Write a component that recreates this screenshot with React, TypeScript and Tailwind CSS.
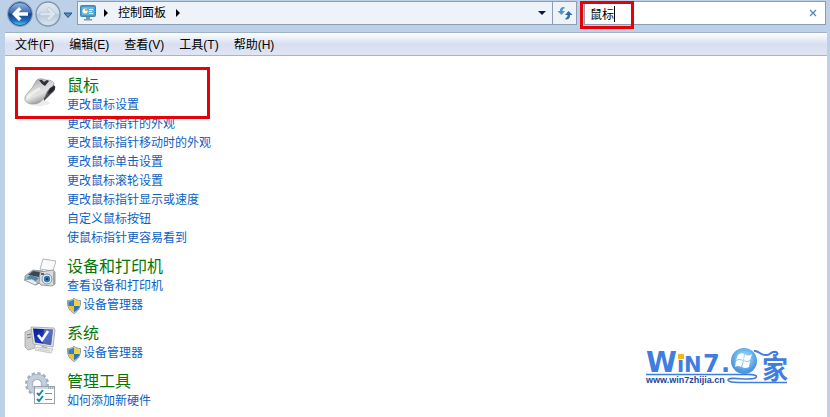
import React, { useState } from 'react';

interface ControlLink {
  label: string;
  shield?: boolean;
}

interface ControlSection {
  title: string;
  icon: React.ReactNode;
  links: ControlLink[];
  highlightFirst?: boolean;
}

const MouseIcon = () => (
  <svg className="w-8 h-8" viewBox="0 0 32 32" aria-hidden="true">
    <defs>
      <linearGradient id="mouseBody" x1="0.2" y1="0" x2="0.7" y2="1">
        <stop offset="0" stopColor="#9c9c9c" />
        <stop offset="0.35" stopColor="#d2d2d2" />
        <stop offset="0.6" stopColor="#e4e4e4" />
        <stop offset="1" stopColor="#7c7c7c" />
      </linearGradient>
    </defs>
    <ellipse cx="15" cy="27" rx="11" ry="3" fill="#ececec" />
    <path d="M24 8 L30 9 C32 12 31 15 28 17 L20 25 C19 20 21 13 24 8Z" fill="#4a4d52" />
    <path d="M13 4 C15 2 19 3 22 4 C26 4 30 5 30 8 C29 11 25 12 23 16 C21 22 17 28 9 28 C3 28 0 25 1 21 C2 18 6 15 8 12 C10 9 11 6 13 4Z" fill="url(#mouseBody)" stroke="#8b8b8b" strokeWidth="0.6" />
    <path d="M15 4 L18 4 L20 6 L23 4 L25 5 L21 10 L18 8Z" fill="#2c3036" />
    <path d="M26 12 L31 10 C32 12 30 14 28 16 L24 18Z" fill="#22262b" />
    <path d="M4 21 C7 17 12 15 15 13" stroke="#fff" strokeWidth="3" strokeLinecap="round" fill="none" opacity="0.55" />
  </svg>
);

const PrinterIcon = () => (
  <svg className="w-8 h-8" viewBox="0 0 32 32" aria-hidden="true">
    <path d="M19 2 L32 4 L29 14 L16 12Z" fill="#fafafa" stroke="#a5a5a5" strokeWidth="0.8" />
    <path d="M1 19 L9 13 L19 14 L17 25 L12 28 L1 23Z" fill="#b7c0c6" stroke="#7c878f" strokeWidth="0.8" />
    <path d="M4 18 L9 14 L17 15 L15 20Z" fill="#3d464d" />
    <path d="M2 21 L7 18 L15 21 L12 24Z" fill="#4a89a8" />
    <path d="M0 23 L8 22 L14 26 L11 28Z" fill="#e5edf2" stroke="#71808b" strokeWidth="0.6" />
    <path d="M16 15 L29 13 L31 15 V27 L28 29 L17 28 L15 26Z" fill="#d9dbdc" stroke="#85898c" strokeWidth="0.8" />
    <path d="M29 14 L31 16 V27 L29 28Z" fill="#a0a5a8" />
    <rect x="17" y="16" width="3" height="2" fill="#59646d" />
    <circle cx="23" cy="22" r="5" fill="#edf2f4" stroke="#7e94a4" />
    <circle cx="23" cy="22" r="3.2" fill="#2d78b4" />
    <circle cx="23" cy="22" r="1.3" fill="#163858" />
  </svg>
);

const SystemIcon = () => (
  <svg className="w-8 h-8" viewBox="0 0 32 32" aria-hidden="true">
    <defs>
      <linearGradient id="systemScreen" x1="0" y1="0" x2="1" y2="1">
        <stop offset="0" stopColor="#071b91" />
        <stop offset="0.5" stopColor="#1838be" />
        <stop offset="1" stopColor="#061765" />
      </linearGradient>
    </defs>
    <path d="M1 8 L8 5 L11 7 V24 L4 26 L1 23Z" fill="#cfd0cd" stroke="#a0a19d" strokeWidth="0.8" />
    <path d="M3 11 L7 10 M3 14 L7 13" stroke="#777" />
    <path d="M7 3 L30 4 L31 6 L29 23 L9 20Z" fill="#dfe1df" stroke="#a0a3a0" strokeWidth="0.8" />
    <path d="M9 4.5 L29 5.5 L27 21 L11 18.5Z" fill="url(#systemScreen)" />
    <path d="M20 5 L29 5.5 L27 21 L19 19.7Z" fill="#8da3e4" opacity="0.5" />
    <path d="M14 11 L18 16 L24 7" stroke="#fff" strokeWidth="2.6" fill="none" />
    <path d="M18 22 L23 23 L24 25 L17 24Z" fill="#a4a7a4" />
    <path d="M13 23 L29 25 L27 29 L11 26Z" fill="#ececea" stroke="#bbb" strokeWidth="0.8" />
    <path d="M14 25 L26 27" stroke="#c6c6c6" />
  </svg>
);

const ToolsIcon = () => (
  <svg className="w-8 h-8" viewBox="0 0 32 32" aria-hidden="true">
    <circle cx="13" cy="12" r="10.5" fill="none" stroke="#a3b2bf" strokeWidth="3" strokeDasharray="3.2 2.3" />
    <circle cx="13" cy="12" r="7.5" fill="none" stroke="#94a5b3" strokeWidth="5.5" />
    <circle cx="13" cy="12" r="7.5" fill="none" stroke="#c3d0db" strokeWidth="4.5" />
    <circle cx="13" cy="12" r="4.5" fill="#fff" stroke="#a4b3be" />
    <rect x="10.5" y="14.5" width="20" height="17" fill="#fff" stroke="#98a3ac" />
    <path d="M11 16 H30" stroke="#cddae6" strokeWidth="2" />
    <path d="M24 16 H29" stroke="#6f7f8e" strokeDasharray="1 1" />
    <path d="M13 21 L15 23 L19 18 M13 27 L15 29 L19 24" stroke="#16899b" strokeWidth="2" fill="none" />
    <path d="M21 21.5 H28 M21 27.5 H28" stroke="#858e95" />
  </svg>
);

const ShieldIcon = () => (
  <svg className="w-4 h-4 shrink-0" viewBox="0 0 16 16" aria-hidden="true">
    <path d="M7 0.5 C9 2 11 2.5 13.5 2.5 C14 9 11 13.5 7 15.5 C3 13.5 0 9 0.5 2.5 C3 2.5 5 2 7 0.5Z" fill="#d5dade" stroke="#8f979d" />
    <path d="M7 1.6 V8 H1.4 L1.3 3.4 C3.5 3.4 5 2.9 7 1.6Z" fill="#2f7fc9" />
    <path d="M7 1.6 V8 H12.6 L12.7 3.4 C10.5 3.4 9 2.9 7 1.6Z" fill="#f7cf38" />
    <path d="M7 8 V14.3 C4 12.8 2 10.7 1.4 8Z" fill="#f3c22b" />
    <path d="M7 8 V14.3 C10 12.8 12 10.7 12.6 8Z" fill="#2a75c0" />
  </svg>
);

const MonitorIcon = () => (
  <svg className="w-4 h-4" viewBox="0 0 16 16" aria-hidden="true">
    <rect x="0.5" y="0.5" width="15" height="11" rx="1" fill="#479bc9" stroke="#4a86ad" />
    <rect x="2" y="2" width="12" height="8" fill="#62b9df" />
    <circle cx="5" cy="6" r="2.5" fill="#fff" />
    <path d="M5 6 V3.5 A2.5 2.5 0 0 1 7.5 6Z" fill="#f0b323" />
    <path d="M9 4.5 H13 M9 6.5 H12 M9 8.5 H13" stroke="#fff" />
    <path d="M6 12 H10 V14 H12 V15.5 H4 V14 H6Z" fill="#779bb0" />
  </svg>
);

const NavButtons = () => (
  <div className="flex items-center">
    <button aria-label="后退" className="w-7 h-7">
      <svg className="w-7 h-7" viewBox="0 0 28 28">
        <defs>
          <linearGradient id="backFill" x1="0" y1="0" x2="0" y2="1">
            <stop offset="0" stopColor="#98b9e2" />
            <stop offset="0.45" stopColor="#3b6bb5" />
            <stop offset="0.5" stopColor="#11408d" />
            <stop offset="0.8" stopColor="#1c72c6" />
            <stop offset="1" stopColor="#58d0f5" />
          </linearGradient>
        </defs>
        <circle cx="13" cy="13" r="12.5" fill="#cbdced" stroke="#8498b3" />
        <circle cx="13" cy="13" r="11.5" fill="url(#backFill)" stroke="#244e86" />
        <path d="M5 13 L12 6 L14.5 8.5 L11.5 11.3 H21 V14.7 H11.5 L14.5 17.5 L12 20Z" fill="#fff" />
      </svg>
    </button>
    <button aria-label="前进" className="w-7 h-7">
      <svg className="w-7 h-7" viewBox="0 0 28 28">
        <defs>
          <linearGradient id="forwardFill" x1="0" y1="0" x2="0" y2="1">
            <stop offset="0" stopColor="#e0e9f3" />
            <stop offset="0.48" stopColor="#cddae7" />
            <stop offset="0.52" stopColor="#b9c9da" />
            <stop offset="1" stopColor="#dae6f1" />
          </linearGradient>
        </defs>
        <circle cx="13" cy="13" r="12" fill="url(#forwardFill)" stroke="#8397ae" strokeWidth="1.4" />
        <path d="M21 13 L14 6 L11.5 8.5 L14.5 11.3 H5 V14.7 H14.5 L11.5 17.5 L14 20Z" fill="#dbe5ee" stroke="#b3c3d3" strokeWidth="0.7" />
      </svg>
    </button>
    <button aria-label="最近的页面" className="w-3 h-7 flex items-center justify-center">
      <svg className="w-3 h-3" viewBox="0 0 12 12">
        <path d="M1 4 H9 L5 8.5Z" fill="#4b91c8" stroke="#235481" />
      </svg>
    </button>
  </div>
);

const Chevron = () => (
  <svg className="w-1 h-2" viewBox="0 0 4 8" aria-hidden="true">
    <path d="M0 0 L4 4 L0 8Z" fill="#000" />
  </svg>
);

const AddressBar = () => (
  <div className="flex-1 flex h-6 border border-[#8d9db1] bg-[#eef3fa]">
    <div className="flex-1 flex items-center gap-2 pl-[2px]">
      <MonitorIcon />
      <Chevron />
      <button className="px-[2px]">控制面板</button>
      <Chevron />
    </div>
    <button aria-label="以前的位置" className="w-5 flex items-center justify-center">
      <svg className="w-2 h-1" viewBox="0 0 8 4">
        <path d="M0 0 H8 L4 4Z" fill="#0b1a3c" />
      </svg>
    </button>
    <button aria-label="刷新" className="w-6 flex items-center justify-center border-l border-[#8d9db1]">
      <svg className="w-4 h-4" viewBox="0 0 16 16">
        <path d="M7.5 2 C4 2 3 3.5 3 6 H0.5 L4.5 10 L8 6 H5.5 C5.5 4.5 6 3.8 7.5 3.5Z" fill="#4b97cb" />
        <path d="M8.5 14.5 C12 14.5 13 13 13 10 H15.5 L11.5 6 L8 10 H10.5 C10.5 12 10 12.6 8.5 13Z" fill="#2f6da8" />
      </svg>
    </button>
  </div>
);

const SearchBox = () => {
  const [query, setQuery] = useState('鼠标');

  return (
    <div className="relative w-[242px] flex items-center h-6 border border-[#8d9db1] bg-white">
      <input
        aria-label="搜索控制面板"
        value={query}
        onChange={(e) => setQuery(e.target.value)}
        className="flex-1 min-w-0 h-full pl-[5px] bg-transparent focus:outline-none"
      />
      <button aria-label="清除" onClick={() => setQuery('')} className="w-6 h-full flex items-center justify-center">
        <svg className="w-2 h-2" viewBox="0 0 8 8">
          <path d="M1 1 L7 7 M7 1 L1 7" stroke="#5686b5" strokeWidth="1.3" />
        </svg>
      </button>
      <span className="absolute left-[29px] top-1 w-px h-4 bg-black" />
      <span className="absolute -left-[5px] -top-px w-[54px] h-7 border-3 border-[#e60008] pointer-events-none" />
    </div>
  );
};

const menuItems = ['文件(F)', '编辑(E)', '查看(V)', '工具(T)', '帮助(H)'];

const sections: ControlSection[] = [
  {
    title: '鼠标',
    icon: <MouseIcon />,
    highlightFirst: true,
    links: [
      { label: '更改鼠标设置' },
      { label: '更改鼠标指针的外观' },
      { label: '更改鼠标指针移动时的外观' },
      { label: '更改鼠标单击设置' },
      { label: '更改鼠标滚轮设置' },
      { label: '更改鼠标指针显示或速度' },
      { label: '自定义鼠标按钮' },
      { label: '使鼠标指针更容易看到' },
    ],
  },
  {
    title: '设备和打印机',
    icon: <PrinterIcon />,
    links: [{ label: '查看设备和打印机' }, { label: '设备管理器', shield: true }],
  },
  {
    title: '系统',
    icon: <SystemIcon />,
    links: [{ label: '设备管理器', shield: true }],
  },
  {
    title: '管理工具',
    icon: <ToolsIcon />,
    links: [{ label: '如何添加新硬件' }],
  },
];

const Section: React.FC<{ section: ControlSection }> = ({ section }) => (
  <section className="relative flex items-start gap-[11px]">
    {section.icon}
    <div>
      <h2 className="h-5 text-base leading-[19px] text-[#087508]">
        <a href="#">{section.title}</a>
      </h2>
      <ul>
        {section.links.map((link) => (
          <li key={link.label} className="h-[19px] leading-[19px]">
            <a href="#" className="inline-flex items-center text-[#0c62c4] hover:underline">
              {link.shield && <ShieldIcon />}
              {link.label}
            </a>
          </li>
        ))}
      </ul>
    </div>
    {section.highlightFirst && (
      <span className="absolute -left-[9px] -top-[9px] w-[195px] h-[52px] border-3 border-[#e60008] pointer-events-none" />
    )}
  </section>
);

const SiteLogo = () => (
  <svg className="absolute right-9 bottom-7 w-[148px] h-[42px]" viewBox="0 0 148 42" role="img" aria-label="Win7之家">
    <defs>
      <radialGradient id="orb" cx="0.5" cy="0.4">
        <stop offset="0" stopColor="#b5e0fa" />
        <stop offset="0.6" stopColor="#78bcee" />
        <stop offset="1" stopColor="#4c97e0" />
      </radialGradient>
    </defs>
    <g fill="#3f7de0" fontFamily="'DejaVu Sans', sans-serif" fontWeight="bold">
      <text x="3" y="25" fontSize="28">W</text>
      <text x="34" y="25" fontSize="21">i</text>
      <text x="41" y="25" fontSize="21">N</text>
      <text x="60" y="25" fontSize="24">7</text>
      <text x="78" y="25" fontSize="24">.</text>
    </g>
    <rect x="35" y="7" width="6" height="5" fill="#f5b51c" />
    <circle cx="101" cy="14" r="13" fill="url(#orb)" />
    <path d="M95 8 Q98 5 101 7 L100 13 Q97 11 93 13Z M102 7 Q105 10 109 7 L107 13 Q104 15 101 13Z M93 14 Q96 12 100 14 L98 20 Q95 18 92 20Z M101 14 Q104 16 107 14 L106 20 Q102 22 99 20Z" fill="#fff" />
    <path d="M111 4 C116 3 117 9 124 8 C128 8 127 4 133 5 C136 6 134 9 130 8" fill="none" stroke="#3f7de0" strokeWidth="2" />
    <text x="119" y="32" fontSize="26" fontWeight="bold" fill="#3f7de0" fontFamily="'Noto Sans CJK SC', sans-serif">家</text>
    <path d="M3 27.5 H101 C112 27 116 29 112 31 C106 34 86 29 85 33 C85 36 98 35.5 108 35.5 H144" fill="none" stroke="#3f7de0" strokeWidth="1.6" />
    <text x="3" y="36" fontSize="9" fontWeight="bold" fill="#1b459f" fontFamily="'Liberation Sans', sans-serif">www.win7zhijia.cn</text>
  </svg>
);

export default function App() {
  return (
    <div className="min-h-screen flex flex-col bg-[#bcd0e8] text-xs text-black font-['Liberation_Sans','Noto_Sans_CJK_SC',sans-serif]">
      <header className="flex items-start gap-[7px] h-8 pt-px pl-[7px] pr-1">
        <div className="flex-1 flex items-start gap-[2px]">
          <NavButtons />
          <AddressBar />
        </div>
        <SearchBox />
      </header>
      <div className="relative flex-1 flex flex-col ml-[5px] mr-[3px] bg-white">
        <nav className="flex items-center gap-[15px] h-6 pt-px pl-[10px] border-t border-b border-t-[#9fb2c9] border-b-[#aab4c8] bg-linear-to-b from-white via-[#d8dff0] to-[#e0e5f3]">
          {menuItems.map((item) => (
            <button key={item}>{item}</button>
          ))}
        </nav>
        <main className="flex-1 flex flex-col gap-[9px] pt-5 pl-[19px]">
          {sections.map((section) => (
            <Section key={section.title} section={section} />
          ))}
        </main>
        <SiteLogo />
      </div>
    </div>
  );
}
